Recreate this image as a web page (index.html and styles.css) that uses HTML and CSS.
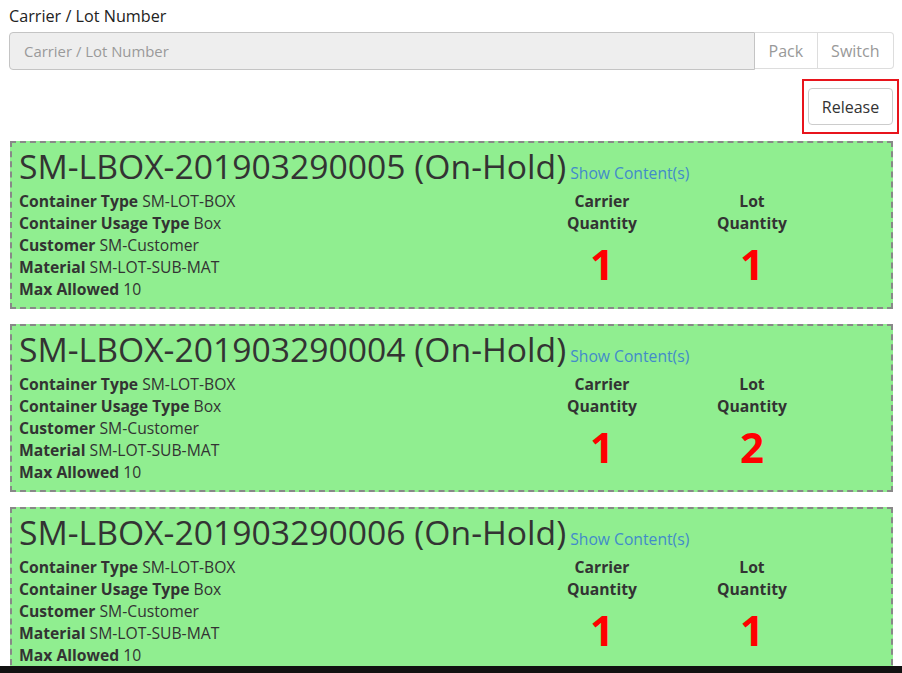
FILE: index.html
```html
<!DOCTYPE html>
<html>
<head>
<meta charset="utf-8">
<link rel="stylesheet" href="styles.css">
</head>
<body>
<div class="page">
  <label class="field-label">Carrier / Lot Number</label>
  <div class="input-group">
    <input class="form-input" type="text" placeholder="Carrier / Lot Number">
    <span class="addon">Pack</span>
    <span class="addon addon-last">Switch</span>
  </div>
  <div class="actions">
    <span class="highlight"><button class="btn">Release</button></span>
  </div>

  <div class="card">
    <div class="title-line"><span class="title">SM-LBOX-201903290005 (On-Hold)</span><a class="link">Show Content(s)</a></div>
    <div class="card-body">
      <div class="details">
        <div><b>Container Type</b> SM-LOT-BOX</div>
        <div><b>Container Usage Type</b> Box</div>
        <div><b>Customer</b> SM-Customer</div>
        <div><b>Material</b> SM-LOT-SUB-MAT</div>
        <div><b>Max Allowed</b> 10</div>
      </div>
      <div class="qty">
        <div class="qty-head">Carrier<br>Quantity</div>
        <div class="qty-num">1</div>
      </div>
      <div class="qty">
        <div class="qty-head">Lot<br>Quantity</div>
        <div class="qty-num">1</div>
      </div>
    </div>
  </div>

  <div class="card">
    <div class="title-line"><span class="title">SM-LBOX-201903290004 (On-Hold)</span><a class="link">Show Content(s)</a></div>
    <div class="card-body">
      <div class="details">
        <div><b>Container Type</b> SM-LOT-BOX</div>
        <div><b>Container Usage Type</b> Box</div>
        <div><b>Customer</b> SM-Customer</div>
        <div><b>Material</b> SM-LOT-SUB-MAT</div>
        <div><b>Max Allowed</b> 10</div>
      </div>
      <div class="qty">
        <div class="qty-head">Carrier<br>Quantity</div>
        <div class="qty-num">1</div>
      </div>
      <div class="qty">
        <div class="qty-head">Lot<br>Quantity</div>
        <div class="qty-num">2</div>
      </div>
    </div>
  </div>

  <div class="card">
    <div class="title-line"><span class="title">SM-LBOX-201903290006 (On-Hold)</span><a class="link">Show Content(s)</a></div>
    <div class="card-body">
      <div class="details">
        <div><b>Container Type</b> SM-LOT-BOX</div>
        <div><b>Container Usage Type</b> Box</div>
        <div><b>Customer</b> SM-Customer</div>
        <div><b>Material</b> SM-LOT-SUB-MAT</div>
        <div><b>Max Allowed</b> 10</div>
      </div>
      <div class="qty">
        <div class="qty-head">Carrier<br>Quantity</div>
        <div class="qty-num">1</div>
      </div>
      <div class="qty">
        <div class="qty-head">Lot<br>Quantity</div>
        <div class="qty-num">1</div>
      </div>
    </div>
  </div>
</div>
<div class="bottom-bar"></div>
</body>
</html>
```
FILE: styles.css
```css
html, body {
  margin: 0;
  padding: 0;
  background: #fff;
}
body {
  font-family: "Open Sans", "Liberation Sans", sans-serif;
  color: #333;
  font-size: 15.7px;
  overflow: hidden;
}
.page {
  padding: 5px 8px 0 9px;
}
.field-label {
  display: block;
  line-height: 22px;
  font-size: 16.2px;
  color: #222;
  margin-bottom: 5px;
}
.input-group {
  display: flex;
  height: 38px;
}
.form-input {
  flex: 1;
  box-sizing: border-box;
  height: 38px;
  margin: 0;
  border: 1px solid #c4c4c4;
  border-radius: 4px 0 0 4px;
  background: #eeeeee;
  padding: 0 14px;
  font-family: "Open Sans", "Liberation Sans", sans-serif;
  font-size: 14.9px;
  color: #555;
  outline: none;
}
.form-input::placeholder {
  color: #9a9a9a;
}
.addon {
  display: flex;
  align-items: center;
  box-sizing: border-box;
  height: 37px;
  padding: 0 13.5px;
  border: 1px solid #ddd;
  border-left: none;
  background: #fff;
  color: #999;
  font-size: 16px;
}
.addon-last {
  border-radius: 0 4px 4px 0;
}
.actions {
  display: flex;
  justify-content: flex-end;
  margin-top: 9px;
  margin-right: -5px;
}
.highlight {
  display: block;
  border: 2px solid #e8141c;
  padding: 7px 4px 7px 4px;
}
.btn {
  display: block;
  box-sizing: border-box;
  width: 85px;
  height: 37px;
  margin: 0;
  border: 1px solid #ccc;
  border-radius: 4px;
  background: #fff;
  color: #333;
  font-family: "Open Sans", "Liberation Sans", sans-serif;
  font-size: 16px;
  padding: 0;
}
.card {
  margin: 7px 1px 15px 1px;
  background: #90ee90;
  border: 2px dashed #888;
  padding: 0 7px 7px 7px;
}
.title-line {
  height: 47px;
  line-height: 47px;
  font-size: 33.7px;
  white-space: nowrap;
}
.title {
  font-size: 33.7px;
  color: #333;
}
.link {
  font-size: 15.7px;
  line-height: 1;
  margin-left: 4px;
  color: #428bca;
}
.card-body {
  display: flex;
}
.details {
  width: 508px;
  line-height: 22px;
}
.details b {
  font-weight: 700;
}
.qty {
  width: 150px;
  text-align: center;
}
.qty-head {
  font-weight: 700;
  line-height: 22px;
}
.qty-num {
  font-weight: 700;
  font-size: 42px;
  line-height: 57px;
  color: #ff0000;
  margin-top: 1px;
}
.bottom-bar {
  position: fixed;
  left: 0;
  right: 0;
  bottom: 0;
  height: 7px;
  background: #111;
}
```
